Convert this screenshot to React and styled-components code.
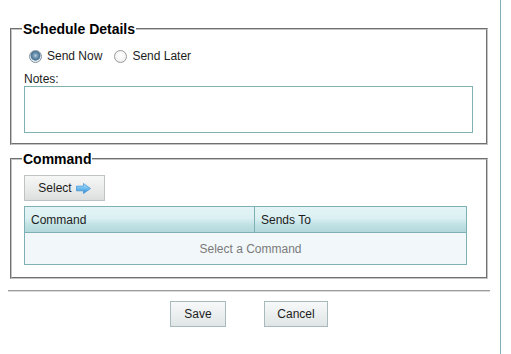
import React from 'react';
import styled, { createGlobalStyle } from 'styled-components';

const Global = createGlobalStyle`
  html, body { margin: 0; padding: 0; background: #fff; }
  body {
    font-family: "Liberation Sans", Arial, sans-serif;
    font-size: 12px;
    color: #1c1c1c;
  }
  * { box-sizing: border-box; }
`;

const Page = styled.div`
  display: flex;
  height: 354px;
  overflow: hidden;
`;

const Main = styled.div`
  width: 482px;
  margin-left: 8px;
  padding-top: 21px;
  display: flex;
  flex-direction: column;
`;

const Divider = styled.div`
  width: 1px;
  margin-left: 10px;
  background: #7cb0b4;
  align-self: stretch;
`;

const Fieldset = styled.fieldset`
  margin: ${p => p.$mt || 0}px 2px 0;
  padding: ${p => p.$pt}px 13px ${p => p.$pb}px 12px;
  border: 2px groove #c4c4c4;
  min-width: 0;
`;

const Legend = styled.legend`
  font-size: 14px;
  font-weight: bold;
  line-height: 16px;
  padding: 0 1px;
  margin-left: -2px;
  color: #000;
`;

const RadioRow = styled.div`
  display: flex;
  align-items: center;
  height: 20px;
`;

const RadioLabel = styled.label`
  display: inline-flex;
  align-items: center;
  margin-right: 7px;
  line-height: 14px;
`;

const Radio = styled.span`
  width: 13px;
  height: 13px;
  margin: 0 5px 0 5px;
  border-radius: 50%;
  border: 1px solid ${p => (p.$checked ? '#7f93a3' : '#9a9a9a')};
  background: ${p =>
    p.$checked
      ? 'radial-gradient(circle at 50% 42%, #b6cfe0 0, #6e94b0 28%, #4e7896 48%, #5f7f97 56%, #e4eaee 62%, #f4f6f7 100%)'
      : 'radial-gradient(circle at 50% 40%, #ffffff 0, #f4f4f4 60%, #e2e2e2 100%)'};
  flex: none;
`;

const FieldLabel = styled.div`
  margin-top: 7px;
  line-height: 13px;
`;

const NotesArea = styled.textarea`
  display: block;
  width: 449px;
  height: 47px;
  margin: 0;
  border: 1px solid #7fb0b3;
  resize: none;
  font-family: inherit;
  font-size: 12px;
  background: #fff;
`;

const ToolButton = styled.button`
  display: flex;
  align-items: center;
  justify-content: center;
  gap: 4px;
  width: 81px;
  height: 26px;
  padding: 0;
  border: 1px solid #bfc3c4;
  background: linear-gradient(#f7f7f7, #e9eaea 55%, #dcdede);
  font-family: inherit;
  font-size: 12px;
  color: #1c1c1c;
`;

const Grid = styled.div`
  width: 443px;
  margin-top: 5px;
  border: 1px solid #7fb0b3;
`;

const HeadRow = styled.div`
  display: grid;
  grid-template-columns: 230px 1fr;
  height: 26px;
  border-bottom: 1px solid #7fb0b3;
  background: linear-gradient(#e4f4f6, #dbf0f2 45%, #c2e2e5 70%, #b2d8db);
`;

const HeadCell = styled.div`
  display: flex;
  align-items: center;
  padding-left: 6px;
  border-right: ${p => (p.$divider ? '1px solid #7fb0b3' : 'none')};
  color: #1c1c1c;
`;

const EmptyRow = styled.div`
  height: 31px;
  display: flex;
  align-items: center;
  justify-content: center;
  padding-left: 10px;
  background: #f2f8fa;
  color: #7a7a7a;
`;

const Rule = styled.hr`
  margin: 11px 0 9px;
  height: 2px;
  border: 0;
  border-top: 1px solid #9c9c9c;
  border-bottom: 1px solid #dadada;
`;

const Actions = styled.div`
  display: flex;
  justify-content: center;
  gap: 38px;
`;

const ActionButton = styled.button`
  width: ${p => p.$w}px;
  height: 26px;
  padding: 0;
  border: 1px solid #a9babe;
  background: linear-gradient(#f7f9f9, #eceff0 50%, #dfe5e6);
  font-family: inherit;
  font-size: 12px;
  color: #1c1c1c;
`;

const ArrowIcon = () => (
  <svg width="15" height="11" viewBox="0 0 15 11">
    <defs>
      <linearGradient id="arrowFill" x1="0" y1="0" x2="0" y2="1">
        <stop offset="0" stopColor="#b7e3fb" />
        <stop offset="0.5" stopColor="#6cbcf0" />
        <stop offset="1" stopColor="#2f86d2" />
      </linearGradient>
    </defs>
    <path
      d="M0.5 3.2 H7.5 V0.5 L14.5 5.5 L7.5 10.5 V7.8 H0.5 Z"
      fill="url(#arrowFill)"
      stroke="#4a97d6"
      strokeWidth="0.8"
      strokeLinejoin="round"
    />
  </svg>
);

export default function App() {
  return (
    <Page>
      <Global />
      <Main>
        <Fieldset $pt={9} $pb={10}>
          <Legend>Schedule Details</Legend>
          <RadioRow>
            <RadioLabel>
              <Radio $checked />
              Send Now
            </RadioLabel>
            <RadioLabel>
              <Radio />
              Send Later
            </RadioLabel>
          </RadioRow>
          <FieldLabel>Notes:</FieldLabel>
          <NotesArea />
        </Fieldset>

        <Fieldset $mt={6} $pt={8} $pb={12}>
          <Legend>Command</Legend>
          <ToolButton>
            Select
            <ArrowIcon />
          </ToolButton>
          <Grid>
            <HeadRow>
              <HeadCell $divider>Command</HeadCell>
              <HeadCell>Sends To</HeadCell>
            </HeadRow>
            <EmptyRow>Select a Command</EmptyRow>
          </Grid>
        </Fieldset>

        <Rule />
        <Actions>
          <ActionButton $w={56}>Save</ActionButton>
          <ActionButton $w={64}>Cancel</ActionButton>
        </Actions>
      </Main>
      <Divider />
    </Page>
  );
}
